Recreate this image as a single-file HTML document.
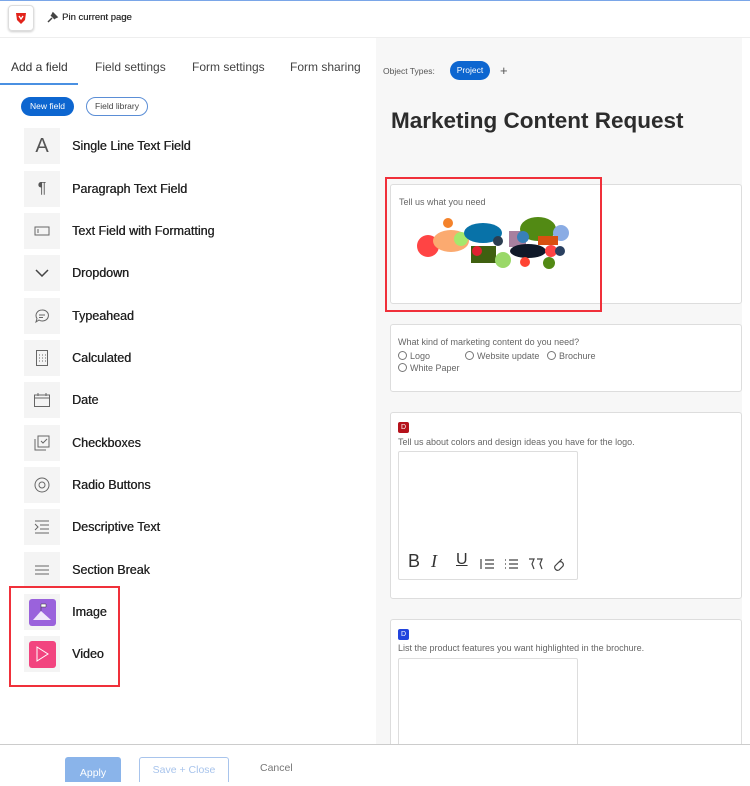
<!DOCTYPE html>
<html><head><style>
*{box-sizing:border-box;margin:0;padding:0}
body{width:750px;height:782px;overflow:hidden;font-family:"Liberation Sans",sans-serif;background:#fff;position:relative;color:#333}
.a{position:absolute}
.ib{position:absolute;left:24px;width:36px;height:36px;background:#f4f4f4;display:flex;align-items:center;justify-content:center}
.lb{position:absolute;left:72px;font-size:12.5px;color:#222;text-shadow:0.35px 0 0 #222}
.card{position:absolute;left:390px;width:352px;background:#fff;border:1px solid #ddd;border-radius:3px}
.t{font-size:9px;color:#666}
.rad{display:inline-block;width:9px;height:9px;border:1px solid #777;border-radius:50%;vertical-align:-1px;margin-right:3px}
.tb{position:absolute;top:99px;font-size:16px;color:#333}
</style></head><body>
<div class="a" style="left:0;top:0;width:750px;height:1px;background:#7aa6e8"></div>
<div class="a" style="left:8px;top:5px;width:26px;height:26px;border:1px solid #ddd;border-radius:4px;box-shadow:0 1px 2px #ccc;display:flex;align-items:center;justify-content:center"><svg width="14" height="14" viewBox="0 0 14 14"><path d="M2 2h10l-1 7-4 4-4-4z" fill="#e2231a"/><path d="M5 5l2 3 2-3" stroke="#fff" stroke-width="1.3" fill="none"/></svg></div>
<svg class="a" style="left:47px;top:11px" width="12" height="12"><path d="M1 11l4-4M4 4l4 4M6 2l4 4-2 1-3-3z" stroke="#444" stroke-width="1.5" fill="#444"/></svg>
<div class="a" style="left:62px;top:12px;font-size:9.5px;color:#333;text-shadow:0.3px 0 0 #333">Pin current page</div>
<div class="a" style="left:0;top:37px;width:750px;height:1px;background:#eee"></div>
<div class="a" style="left:376px;top:38px;width:366px;height:707px;background:#f7f7f7"></div>
<div class="a" style="left:11px;top:60px;font-size:12px;color:#333">Add a field</div>
<div class="a" style="left:95px;top:60px;font-size:12px;color:#444">Field settings</div>
<div class="a" style="left:192px;top:60px;font-size:12px;color:#444">Form settings</div>
<div class="a" style="left:290px;top:60px;font-size:12px;color:#444">Form sharing</div>
<div class="a" style="left:0;top:83px;width:78px;height:2px;background:#4a90e2"></div>
<div class="a" style="left:21px;top:97px;width:53px;height:19px;background:#0d66d0;border-radius:10px;color:#fff;font-size:8.5px;text-align:center;line-height:19px">New field</div>
<div class="a" style="left:86px;top:97px;width:62px;height:19px;border:1px solid #5b8ed6;border-radius:10px;color:#444;font-size:8.5px;text-align:center;line-height:17px">Field library</div>

<div class="ib" style="top:128px"><span style="font-size:20px;color:#555">A</span></div><div class="lb" style="top:139px">Single Line Text Field</div>
<div class="ib" style="top:171px"><span style="font-size:16px;color:#555">¶</span></div><div class="lb" style="top:182px">Paragraph Text Field</div>
<div class="ib" style="top:213px"><svg width="16" height="10"><rect x="1" y="1" width="14" height="8" fill="none" stroke="#666"/><path d="M4 3v4" stroke="#666"/></svg></div><div class="lb" style="top:224px">Text Field with Formatting</div>
<div class="ib" style="top:255px"><svg width="14" height="8"><path d="M1 1l6 6 6-6" fill="none" stroke="#444" stroke-width="1.5"/></svg></div><div class="lb" style="top:266px">Dropdown</div>
<div class="ib" style="top:298px"><svg width="16" height="16"><path d="M8 2a6 5.5 0 1 1-3 10l-3 2 1-3.5A6 5.5 0 0 1 8 2z" fill="none" stroke="#666"/><path d="M5 7h6M5 9.5h4" stroke="#666"/></svg></div><div class="lb" style="top:309px">Typeahead</div>
<div class="ib" style="top:340px"><svg width="12" height="16"><rect x=".5" y=".5" width="11" height="15" fill="none" stroke="#666"/><path d="M3 5h1M6 5h1M9 5h1M3 8h1M6 8h1M9 8h1M3 11h1M6 11h1M9 11h1" stroke="#666"/></svg></div><div class="lb" style="top:351px">Calculated</div>
<div class="ib" style="top:382px"><svg width="16" height="14"><rect x=".5" y="2" width="15" height="11.5" fill="none" stroke="#666"/><path d="M1 5h14M4 0v3M12 0v3" stroke="#666"/></svg></div><div class="lb" style="top:393px">Date</div>
<div class="ib" style="top:425px"><svg width="16" height="16"><rect x="4" y="1" width="11" height="11" fill="none" stroke="#666"/><path d="M1 4v11h11M7 6l2 2 4-4" fill="none" stroke="#666"/></svg></div><div class="lb" style="top:436px">Checkboxes</div>
<div class="ib" style="top:467px"><svg width="16" height="16"><circle cx="8" cy="8" r="7" fill="none" stroke="#666"/><circle cx="8" cy="8" r="3" fill="none" stroke="#666"/></svg></div><div class="lb" style="top:478px">Radio Buttons</div>
<div class="ib" style="top:509px"><svg width="16" height="14"><path d="M1 1h14M6 5h9M6 9h9M1 13h14M1 4l3 3-3 3" fill="none" stroke="#666"/></svg></div><div class="lb" style="top:520px">Descriptive Text</div>
<div class="ib" style="top:552px"><svg width="16" height="10"><path d="M1 1h14M1 5h14M1 9h14" stroke="#666"/></svg></div><div class="lb" style="top:563px">Section Break</div>
<div class="ib" style="top:594px"><div style="width:27px;height:27px;background:#9a62dc;border-radius:3px;display:flex;align-items:center;justify-content:center"><svg width="20" height="18"><path d="M1 17l8-9 10 9z" fill="#fff" opacity=".85"/><path d="M9 8V1h5v3H9" fill="#fff" stroke="#333" stroke-width=".5"/></svg></div></div><div class="lb" style="top:605px">Image</div>
<div class="ib" style="top:636px"><div style="width:27px;height:27px;background:#f2447f;border-radius:3px;display:flex;align-items:center;justify-content:center"><svg width="14" height="16"><path d="M2 1l11 7-11 7z" fill="none" stroke="#fff"/></svg></div></div><div class="lb" style="top:647px">Video</div>
<div class="a" style="left:9px;top:586px;width:111px;height:101px;border:2px solid #f0303a"></div>

<div class="a" style="left:383px;top:66px;font-size:8.5px;color:#555">Object Types:</div>
<div class="a" style="left:450px;top:61px;width:40px;height:19px;background:#0d66d0;border-radius:10px;color:#fff;font-size:8.5px;text-align:center;line-height:19px">Project</div>
<div class="a" style="left:500px;top:63px;font-size:13px;color:#555">+</div>
<div class="a" style="left:391px;top:108px;font-size:22.5px;font-weight:bold;color:#2c2c2c">Marketing Content Request</div>

<div class="card" style="top:184px;height:120px"><div class="t" style="position:absolute;left:8px;top:12px">Tell us what you need</div>
<svg class="a" style="left:22px;top:28px" width="160" height="60">
<circle cx="15" cy="33" r="11" fill="#f44"/><ellipse cx="38" cy="28" rx="18" ry="11" fill="#fbaa70"/><circle cx="35" cy="10" r="5" fill="#f4822a"/><circle cx="48" cy="26" r="7" fill="#a4e86c"/>
<ellipse cx="70" cy="20" rx="19" ry="10" fill="#0872a8"/><circle cx="85" cy="28" r="5" fill="#2b3d50"/><rect x="58" y="33" width="25" height="17" fill="#3f6010"/><circle cx="90" cy="47" r="8" fill="#9ad868"/>
<rect x="96" y="18" width="17" height="16" fill="#a8809f"/><ellipse cx="125" cy="16" rx="18" ry="12" fill="#528a14"/><circle cx="148" cy="20" r="8" fill="#8aace4"/><circle cx="110" cy="24" r="6" fill="#3880b8"/>
<rect x="125" y="23" width="20" height="9" fill="#d85010"/><ellipse cx="115" cy="38" rx="18" ry="7" fill="#101828"/><circle cx="138" cy="38" r="6" fill="#f44"/><circle cx="147" cy="38" r="5" fill="#2a4060"/>
<circle cx="112" cy="49" r="5" fill="#f43"/><circle cx="136" cy="50" r="6" fill="#528a14"/><circle cx="64" cy="38" r="5" fill="#e02030"/></svg></div>
<div class="a" style="left:385px;top:177px;width:217px;height:135px;border:2px solid #f0303a"></div>

<div class="card" style="top:324px;height:68px"><div class="t" style="position:absolute;left:7px;top:12px">What kind of marketing content do you need?</div>
<div class="t" style="position:absolute;left:7px;top:26px"><span class="rad"></span>Logo</div>
<div class="t" style="position:absolute;left:74px;top:26px"><span class="rad"></span>Website update</div>
<div class="t" style="position:absolute;left:156px;top:26px"><span class="rad"></span>Brochure</div>
<div class="t" style="position:absolute;left:7px;top:38px"><span class="rad"></span>White Paper</div></div>

<div class="card" style="top:412px;height:187px">
<div class="a" style="left:7px;top:9px;width:11px;height:11px;background:#b5121b;border-radius:2px;color:#fff;font-size:7px;text-align:center;line-height:11px">D</div>
<div class="t" style="position:absolute;left:7px;top:24px">Tell us about colors and design ideas you have for the logo.</div>
<div class="a" style="left:7px;top:38px;width:180px;height:129px;border:1px solid #ddd;border-radius:2px">
<div class="tb" style="left:9px;font-size:18px">B</div>
<div class="tb" style="left:32px;font-size:18px;font-family:'Liberation Serif';font-style:italic">I</div>
<div class="tb" style="left:57px;font-size:16px;text-decoration:underline">U</div>
<svg class="a" style="left:80px;top:105px" width="110" height="14"><g stroke="#444" stroke-width="1.2" fill="none"><path d="M2 2v10M6 3h9M6 7h9M6 11h9"/><path d="M26 3h1M26 7h1M26 11h1M30 3h9M30 7h9M30 11h9"/><path d="M50 2h5l-2 5 2 5M58 2h5l-2 5 2 5"/><path d="M76 9l4-4a3 3 0 0 1 4 4l-4 4a3 3 0 0 1-4-4zM80 5l3-3"/></g></svg>
</div></div>

<div class="card" style="top:619px;height:140px">
<div class="a" style="left:7px;top:9px;width:11px;height:11px;background:#2244dd;border-radius:2px;color:#fff;font-size:7px;text-align:center;line-height:11px">D</div>
<div class="t" style="position:absolute;left:7px;top:23px">List the product features you want highlighted in the brochure.</div>
<div class="a" style="left:7px;top:38px;width:180px;height:120px;border:1px solid #ddd;border-radius:2px"></div></div>

<div class="a" style="left:0;top:744px;width:750px;height:38px;background:#fff;border-top:1px solid #ccc"></div>
<div class="a" style="left:65px;top:757px;width:56px;height:25px;background:#8ab4ea;border-radius:3px 3px 0 0;color:#fff;font-size:10.5px;text-align:center;line-height:25px;padding-top:4px">Apply</div>
<div class="a" style="left:139px;top:757px;width:90px;height:25px;border:1px solid #a8c4ec;border-bottom:none;border-radius:3px 3px 0 0;color:#a8c4ec;font-size:10.5px;text-align:center;line-height:22px;padding-top:1px">Save + Close</div>
<div class="a" style="left:260px;top:762px;font-size:10.5px;color:#777">Cancel</div>
</body></html>
